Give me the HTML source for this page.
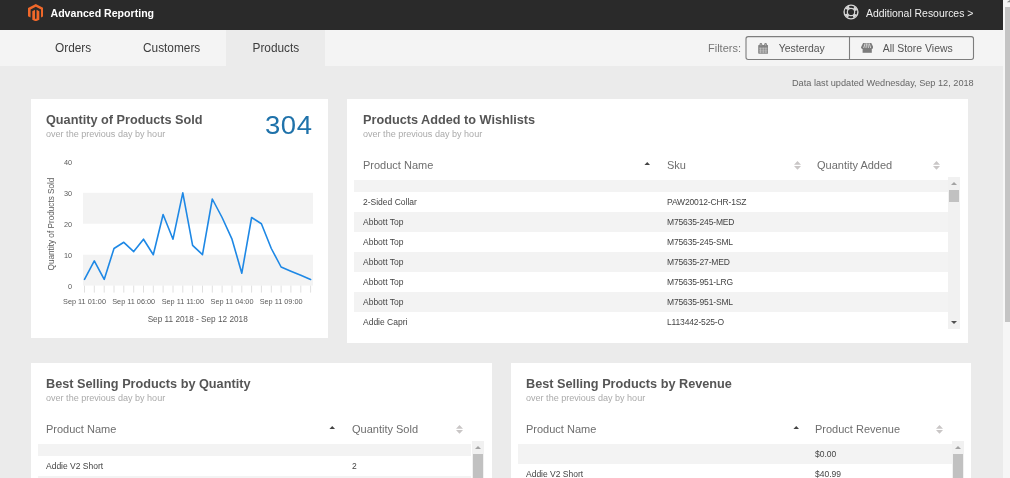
<!DOCTYPE html>
<html>
<head>
<meta charset="utf-8">
<title>Advanced Reporting</title>
<style>
*{box-sizing:border-box;margin:0;padding:0}
html,body{width:1010px;height:478px;overflow:hidden;background:#ebebeb;font-family:"Liberation Sans",sans-serif;color:#444}
body{position:relative;will-change:transform}
.abs{position:absolute}
.hdr{left:0;top:0;width:1003px;height:30px;background:#2a2a2a}
.hdr .ttl{left:50.5px;top:5.5px;font-size:10.6px;font-weight:bold;color:#fff;line-height:14px;white-space:nowrap}
.hdr .res{left:866px;top:6.6px;font-size:10.42px;color:#f0f0f0;line-height:14px;white-space:nowrap}
.tabs{left:0;top:30px;width:1003px;height:36px;background:#f4f4f4}
.tab{top:0;height:36px;line-height:36px;font-size:11.85px;color:#3d3d3d;white-space:nowrap}
.tab.act{background:#ebebeb;left:226px;width:99px}
.flt{font-size:11px;color:#777;white-space:nowrap;line-height:14px}
.fbox{left:746px;top:6px;width:228px;height:24px;border:1px solid #808080;border-radius:2px}
.fdiv{left:849px;top:6px;width:1px;height:24px;background:#808080}
.panel{background:#fff}
.pt{font-size:12.7px;font-weight:bold;color:#555;white-space:nowrap;line-height:16px}
.ps{font-size:9.05px;color:#aaa;white-space:nowrap;line-height:10px}
.th{font-size:11px;color:#6e6e6e;white-space:nowrap;line-height:14px}
.row{left:0;height:20px}
.row.g{background:#f3f3f3}
.cell{font-size:8.5px;color:#444;white-space:nowrap;line-height:20px;top:0}
.sb{background:#f1f1f1}
.sbt{background:#c1c1c1}
.vs{left:1003px;top:0;width:7px;height:478px;background:#f6f6f6}
.vst{left:1005px;top:7px;width:5px;height:315px;background:#c4c4c4}
</style>
</head>
<body>
<div class="abs hdr">
  <svg class="abs" style="left:27.8px;top:3.6px" width="15.6" height="17.4" viewBox="0 0 100 123.74" preserveAspectRatio="none"><path d="M50 0L0 28.87v57.74l16.5 9.5V38.4L50 19L83.5 38.4v57.71L100 86.61V28.87z" fill="#f0682a"/><path d="M55 103.8L50 106.7l-5-2.9V41l-17.5 10v60.4L50 123.74l22.5-12.38V51l-17.5-10z" fill="#f0682a"/></svg>
  <div class="abs ttl">Advanced Reporting</div>
  <svg class="abs" style="left:843.4px;top:4.4px" width="16" height="16" viewBox="0 0 16 16"><circle cx="8" cy="8" r="6.9" fill="none" stroke="#d6d6d6" stroke-width="1.4"/><circle cx="8" cy="8" r="3.7" fill="none" stroke="#d6d6d6" stroke-width="1.2"/><circle cx="8" cy="8" r="5.2" fill="none" stroke="#d6d6d6" stroke-width="2.6" stroke-dasharray="3.4 4.768" stroke-dashoffset="-2.384"/></svg>
  <div class="abs res">Additional Resources &gt;</div>
</div>
<div class="abs tabs">
  <div class="abs tab" style="left:55px">Orders</div>
  <div class="abs tab" style="left:143px">Customers</div>
  <div class="abs tab act"></div>
  <div class="abs tab" style="left:252.5px">Products</div>
  <div class="abs flt" style="left:708px;top:11px">Filters:</div>
  <svg class="abs" style="left:757.8px;top:12.8px" width="10.6" height="10.9" viewBox="0 0 10.6 10.9"><rect x="0.2" y="2.1" width="10.1" height="8.6" rx="0.7" fill="#838383"/><rect x="1.6" y="0" width="2.6" height="3.4" rx="1.2" fill="#838383"/><rect x="6.3" y="0" width="2.6" height="3.4" rx="1.2" fill="#838383"/><path d="M2.9 1v1.6M7.6 1v1.6" stroke="#f4f4f4" stroke-width="0.5" opacity="0.8"/><path d="M1 5.2h8.5M1 7.2h8.5M1 9h8.5M2.6 4.6v5.6M5.25 4.6v5.6M7.9 4.6v5.6" stroke="#f4f4f4" stroke-width="0.55" opacity="0.75"/></svg><svg class="abs" style="left:860.6px;top:13.1px" width="12.4" height="9.8" viewBox="0 0 12.4 9.8"><path d="M2.1 0h8.2l2.1 4.2c0 1.1-0.9 1.8-1.9 1.8H1.9C0.900 6 0 5.300 0 4.200z" fill="#7c7c7c"/><rect x="1.6" y="5" width="9.2" height="4.8" fill="#7c7c7c"/><path d="M4.100 0.400L2.700 5.000M5.500 0.400L5.000 5.000M6.900 0.400L7.400 5.000M8.300 0.400L9.700 5.000" stroke="#f4f4f4" stroke-width="0.75"/></svg>
  <svg class="abs" style="left:740px;top:0" width="240" height="36" viewBox="0 0 240 36"><rect x="6" y="6.6" width="227.5" height="22.9" rx="2.2" fill="none" stroke="#7d7d7d" stroke-width="1.1"/><path d="M109.5 6.6v22.9" stroke="#7d7d7d" stroke-width="1.1"/></svg>
  <div class="abs flt" style="left:778.8px;top:12px;color:#555;font-size:10.45px">Yesterday</div>
  <div class="abs flt" style="left:882.7px;top:12px;color:#555;font-size:10.45px">All Store Views</div>
</div>
<div class="abs flt" style="left:792px;top:76px;font-size:9.18px;color:#666">Data last updated Wednesday, Sep 12, 2018</div>

<!-- Panel 1 -->
<div class="abs panel" style="left:31px;top:99px;width:297px;height:239px">
  <div class="abs pt" style="left:15px;top:12.8px">Quantity of Products Sold</div>
  <div class="abs ps" style="left:15px;top:30px">over the previous day by hour</div>
  <div class="abs" style="left:233.7px;top:11px;font-size:25px;line-height:30px;color:#1f72aa;letter-spacing:0.5px;transform:scaleX(1.1);transform-origin:0 0;white-space:nowrap">304</div>

  <svg class="abs" style="left:0;top:0" width="297" height="239" viewBox="0 0 297 239">
    <rect x="52" y="93.8" width="230" height="30.9" fill="#f3f3f3"/>
    <rect x="52" y="155.7" width="230" height="30.9" fill="#f3f3f3"/>
    <line x1="53.5" y1="186.6" x2="53.5" y2="193.6" stroke="#e0e0e0" stroke-width="1"/><line x1="63.3" y1="186.6" x2="63.3" y2="193.6" stroke="#e0e0e0" stroke-width="1"/><line x1="73.2" y1="186.6" x2="73.2" y2="193.6" stroke="#e0e0e0" stroke-width="1"/><line x1="83.0" y1="186.6" x2="83.0" y2="193.6" stroke="#e0e0e0" stroke-width="1"/><line x1="92.8" y1="186.6" x2="92.8" y2="193.6" stroke="#e0e0e0" stroke-width="1"/><line x1="102.7" y1="186.6" x2="102.7" y2="193.6" stroke="#e0e0e0" stroke-width="1"/><line x1="112.5" y1="186.6" x2="112.5" y2="193.6" stroke="#e0e0e0" stroke-width="1"/><line x1="122.3" y1="186.6" x2="122.3" y2="193.6" stroke="#e0e0e0" stroke-width="1"/><line x1="132.1" y1="186.6" x2="132.1" y2="193.6" stroke="#e0e0e0" stroke-width="1"/><line x1="142.0" y1="186.6" x2="142.0" y2="193.6" stroke="#e0e0e0" stroke-width="1"/><line x1="151.8" y1="186.6" x2="151.8" y2="193.6" stroke="#e0e0e0" stroke-width="1"/><line x1="161.6" y1="186.6" x2="161.6" y2="193.6" stroke="#e0e0e0" stroke-width="1"/><line x1="171.5" y1="186.6" x2="171.5" y2="193.6" stroke="#e0e0e0" stroke-width="1"/><line x1="181.3" y1="186.6" x2="181.3" y2="193.6" stroke="#e0e0e0" stroke-width="1"/><line x1="191.1" y1="186.6" x2="191.1" y2="193.6" stroke="#e0e0e0" stroke-width="1"/><line x1="201.0" y1="186.6" x2="201.0" y2="193.6" stroke="#e0e0e0" stroke-width="1"/><line x1="210.8" y1="186.6" x2="210.8" y2="193.6" stroke="#e0e0e0" stroke-width="1"/><line x1="220.6" y1="186.6" x2="220.6" y2="193.6" stroke="#e0e0e0" stroke-width="1"/><line x1="230.4" y1="186.6" x2="230.4" y2="193.6" stroke="#e0e0e0" stroke-width="1"/><line x1="240.3" y1="186.6" x2="240.3" y2="193.6" stroke="#e0e0e0" stroke-width="1"/><line x1="250.1" y1="186.6" x2="250.1" y2="193.6" stroke="#e0e0e0" stroke-width="1"/><line x1="259.9" y1="186.6" x2="259.9" y2="193.6" stroke="#e0e0e0" stroke-width="1"/><line x1="269.8" y1="186.6" x2="269.8" y2="193.6" stroke="#e0e0e0" stroke-width="1"/><line x1="279.6" y1="186.6" x2="279.6" y2="193.6" stroke="#e0e0e0" stroke-width="1"/>
    <polyline points="53.5,180.4 63.3,161.9 73.2,180.4 83.0,149.5 92.8,143.3 102.7,152.6 112.5,140.2 122.3,155.7 132.1,115.5 142.0,140.2 151.8,93.8 161.6,146.4 171.5,155.7 181.3,100.0 191.1,118.5 201.0,140.2 210.8,174.2 220.6,118.5 230.4,124.7 240.3,149.5 250.1,168.0 259.9,172.2 269.8,176.3 279.6,180.4" fill="none" stroke="#1e88e5" stroke-width="1.6" stroke-linejoin="round" stroke-linecap="round"/>
    <g font-family="Liberation Sans, sans-serif" font-size="7.3" fill="#5a5a5a">
      <text x="41" y="66.3" text-anchor="end">40</text>
      <text x="41" y="97.2" text-anchor="end">30</text>
      <text x="41" y="128.1" text-anchor="end">20</text>
      <text x="41" y="159.1" text-anchor="end">10</text>
      <text x="41" y="190.0" text-anchor="end">0</text>
      <text x="53.5" y="205" text-anchor="middle">Sep 11 01:00</text>
      <text x="102.7" y="205" text-anchor="middle">Sep 11 06:00</text>
      <text x="151.8" y="205" text-anchor="middle">Sep 11 11:00</text>
      <text x="201.0" y="205" text-anchor="middle">Sep 11 04:00</text>
      <text x="250.1" y="205" text-anchor="middle">Sep 11 09:00</text>
      <text x="166.7" y="223" text-anchor="middle" font-size="8.24">Sep 11 2018 - Sep 12 2018</text>
      <text transform="translate(22.6,125) rotate(-90)" text-anchor="middle" font-size="8.2">Quantity of Products Sold</text>
    </g>
  </svg>
</div>

<!-- Panel 2 -->
<div class="abs panel" style="left:347px;top:99px;width:621px;height:244px">
  <div class="abs pt" style="left:16px;top:12.8px">Products Added to Wishlists</div>
  <div class="abs ps" style="left:16px;top:30px">over the previous day by hour</div>
  <div class="abs th" style="left:16px;top:59px">Product Name</div>
  <div class="abs th" style="left:320px;top:59px">Sku</div>
  <div class="abs th" style="left:470px;top:59px">Quantity Added</div>

  <svg class="abs" style="left:297.3px;top:62.6px" width="6.5" height="3.5" viewBox="0 0 7 4" preserveAspectRatio="none"><path d="M0 4L3.5 0L7 4z" fill="#444"/></svg><svg class="abs" style="left:447.0px;top:62.2px" width="7" height="8.8" viewBox="0 0 7 9" preserveAspectRatio="none"><path d="M0 3.8L3.5 0L7 3.8z M0 5.2L3.5 9L7 5.2z" fill="#c9c6c6"/></svg><svg class="abs" style="left:586.0px;top:62.2px" width="7" height="8.8" viewBox="0 0 7 9" preserveAspectRatio="none"><path d="M0 3.8L3.5 0L7 3.8z M0 5.2L3.5 9L7 5.2z" fill="#c9c6c6"/></svg>
  <div class="abs" style="left:7px;top:81px;width:594px;height:150px;overflow:hidden">
    <div class="abs row g" style="top:0px;height:12px;width:100%"></div>
    <div class="abs row" style="top:12px;height:20px;width:100%"><div class="abs cell" style="left:9px">2-Sided Collar</div><div class="abs cell" style="left:313px;letter-spacing:-0.15px">PAW20012-CHR-1SZ</div></div>
    <div class="abs row g" style="top:32px;height:20px;width:100%"><div class="abs cell" style="left:9px">Abbott Top</div><div class="abs cell" style="left:313px;letter-spacing:-0.15px">M75635-245-MED</div></div>
    <div class="abs row" style="top:52px;height:20px;width:100%"><div class="abs cell" style="left:9px">Abbott Top</div><div class="abs cell" style="left:313px;letter-spacing:-0.15px">M75635-245-SML</div></div>
    <div class="abs row g" style="top:72px;height:20px;width:100%"><div class="abs cell" style="left:9px">Abbott Top</div><div class="abs cell" style="left:313px;letter-spacing:-0.15px">M75635-27-MED</div></div>
    <div class="abs row" style="top:92px;height:20px;width:100%"><div class="abs cell" style="left:9px">Abbott Top</div><div class="abs cell" style="left:313px;letter-spacing:-0.15px">M75635-951-LRG</div></div>
    <div class="abs row g" style="top:112px;height:20px;width:100%"><div class="abs cell" style="left:9px">Abbott Top</div><div class="abs cell" style="left:313px;letter-spacing:-0.15px">M75635-951-SML</div></div>
    <div class="abs row" style="top:132px;height:20px;width:100%"><div class="abs cell" style="left:9px">Addie Capri</div><div class="abs cell" style="left:313px;letter-spacing:-0.15px">L113442-525-O</div></div>
  </div>
  <div class="abs sb" style="left:601px;top:78px;width:12px;height:152px"></div>
  <div class="abs sbt" style="left:602px;top:91px;width:10px;height:12px"></div>
  <svg class="abs" style="left:604px;top:83px" width="6" height="3" viewBox="0 0 6 3"><path d="M0 3L3 0L6 3z" fill="#a3a3a3"/></svg>
  <svg class="abs" style="left:604px;top:222px" width="6" height="3" viewBox="0 0 6 3"><path d="M0 0L3 3L6 0z" fill="#505050"/></svg>
</div>

<!-- Panel 3 -->
<div class="abs panel" style="left:31px;top:363px;width:460.6px;height:120px">
  <div class="abs pt" style="left:15px;top:12.8px">Best Selling Products by Quantity</div>
  <div class="abs ps" style="left:15px;top:30px">over the previous day by hour</div>
  <div class="abs th" style="left:15px;top:59px">Product Name</div>
  <div class="abs th" style="left:321px;top:59px">Quantity Sold</div>

  <svg class="abs" style="left:298.3px;top:62.6px" width="6.5" height="3.5" viewBox="0 0 7 4" preserveAspectRatio="none"><path d="M0 4L3.5 0L7 4z" fill="#444"/></svg><svg class="abs" style="left:424.5px;top:62.2px" width="7" height="8.8" viewBox="0 0 7 9" preserveAspectRatio="none"><path d="M0 3.8L3.5 0L7 3.8z M0 5.2L3.5 9L7 5.2z" fill="#c9c6c6"/></svg>
  <div class="abs" style="left:7px;top:81px;width:433px;height:60px;overflow:hidden">
    <div class="abs row g" style="top:0px;height:12px;width:100%"></div>
    <div class="abs row" style="top:12px;height:20px;width:100%"><div class="abs cell" style="left:8px">Addie V2 Short</div><div class="abs cell" style="left:314px">2</div></div>
    <div class="abs row g" style="top:32px;height:20px;width:100%"></div>
  </div>
  <div class="abs sb" style="left:440.7px;top:78px;width:12.5px;height:60px"></div>
  <div class="abs sbt" style="left:442.1px;top:90.5px;width:9.8px;height:40px"></div>
  <svg class="abs" style="left:444px;top:83px" width="6" height="3" viewBox="0 0 6 3"><path d="M0 3L3 0L6 3z" fill="#a3a3a3"/></svg>
</div>

<!-- Panel 4 -->
<div class="abs panel" style="left:511px;top:363px;width:460.2px;height:120px">
  <div class="abs pt" style="left:15px;top:12.8px">Best Selling Products by Revenue</div>
  <div class="abs ps" style="left:15px;top:30px">over the previous day by hour</div>
  <div class="abs th" style="left:15px;top:59px">Product Name</div>
  <div class="abs th" style="left:304px;top:59px">Product Revenue</div>

  <svg class="abs" style="left:281.8px;top:62.6px" width="6.5" height="3.5" viewBox="0 0 7 4" preserveAspectRatio="none"><path d="M0 4L3.5 0L7 4z" fill="#444"/></svg><svg class="abs" style="left:425px;top:62.2px" width="7" height="8.8" viewBox="0 0 7 9" preserveAspectRatio="none"><path d="M0 3.8L3.5 0L7 3.8z M0 5.2L3.5 9L7 5.2z" fill="#c9c6c6"/></svg>
  <div class="abs" style="left:7px;top:81px;width:434px;height:60px;overflow:hidden">
    <div class="abs row g" style="top:0px;height:20px;width:100%"><div class="abs cell" style="left:297px">$0.00</div></div>
    <div class="abs row" style="top:20px;height:20px;width:100%"><div class="abs cell" style="left:8px">Addie V2 Short</div><div class="abs cell" style="left:297px">$40.99</div></div>
  </div>
  <div class="abs sb" style="left:441px;top:78px;width:12.2px;height:60px"></div>
  <div class="abs sbt" style="left:442.4px;top:90.5px;width:9.5px;height:40px"></div>
  <svg class="abs" style="left:444.2px;top:83px" width="6" height="3" viewBox="0 0 6 3"><path d="M0 3L3 0L6 3z" fill="#a3a3a3"/></svg>
</div>

<div class="abs vs"></div>
<div class="abs vst"></div>
<svg class="abs" style="left:1006px;top:0" width="4" height="3" viewBox="0 0 4 3"><path d="M0.800 2.200L4 0V2.200z" fill="#8a8a8a"/></svg>
</body>
</html>
